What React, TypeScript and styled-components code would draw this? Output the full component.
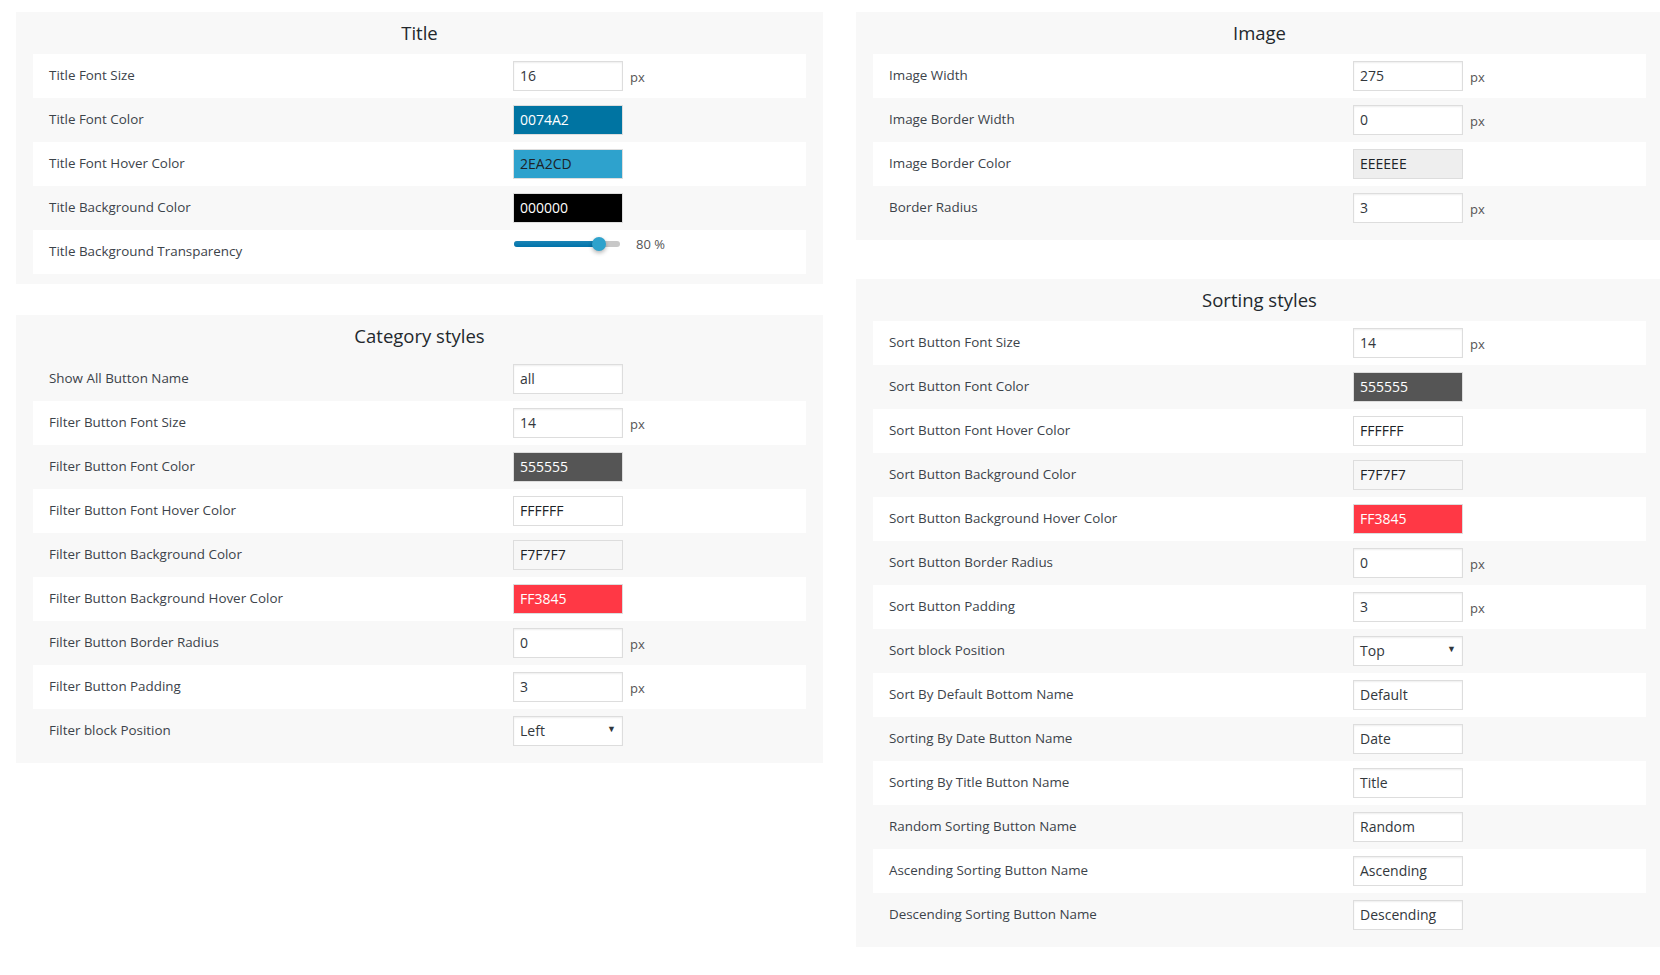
import React from 'react';
import styled, { createGlobalStyle } from 'styled-components';

const GlobalStyle = createGlobalStyle`
  html, body {
    margin: 0;
    padding: 0;
    background: #fff;
    overflow: hidden;
  }
  body {
    font-family: 'Open Sans', 'Noto Sans', sans-serif;
    color: #444;
  }
`;

type Field =
  | { kind: 'number'; label: string; value: string }
  | { kind: 'text'; label: string; value: string }
  | { kind: 'color'; label: string; value: string; fg: string }
  | { kind: 'range'; label: string; value: number }
  | { kind: 'select'; label: string; value: string };

interface Section {
  title: string;
  fields: Field[];
  shifted?: boolean;
}

const Page = styled.div`
  display: grid;
  grid-template-columns: 807px 807px;
  column-gap: 33px;
  padding: 12px 0 0 16px;
  width: 1700px;
  align-items: start;
`;

const Column = styled.div<{ $gap: number }>`
  display: flex;
  flex-direction: column;
  gap: ${(p) => p.$gap}px;
`;

const Panel = styled.section`
  background: #f8f8f8;
  padding: 0 17px 10px;
`;

const Heading = styled.h3`
  margin: 0;
  height: 42px;
  line-height: 42px;
  text-align: center;
  font-size: 18.5px;
  font-weight: 500;
  color: #23282d;
`;

const Row = styled.div<{ $white: boolean; $top?: boolean }>`
  display: grid;
  grid-template-columns: 480px 1fr;
  align-items: ${(p) => (p.$top ? 'start' : 'center')};
  height: 44px;
  background: ${(p) => (p.$white ? '#fff' : 'transparent')};
`;

const Label = styled.div<{ $top?: boolean }>`
  padding-left: 16px;
  font-size: 13.4px;
  color: #3c434a;
  margin-top: -2px;
  ${(p) => (p.$top ? 'align-self: center;' : '')}
`;

const Control = styled.div`
  display: flex;
  align-items: center;
  gap: 7px;
  margin-top: -1px;
`;

const Input = styled.div<{ $bg?: string; $fg?: string }>`
  box-sizing: border-box;
  width: 110px;
  height: 30px;
  padding: 0 6px;
  display: flex;
  align-items: center;
  border: 1px solid #ddd;
  box-shadow: ${(p) => (p.$bg ? 'none' : 'inset 0 1px 2px rgba(0,0,0,0.07)')};
  background: ${(p) => p.$bg || '#fff'};
  color: ${(p) => p.$fg || '#32373c'};
  font-size: 14px;
`;

const Unit = styled.span`
  font-size: 13px;
  color: #555;
  margin-top: 3px;
`;

const Arrow = styled.span`
  margin-left: auto;
  font-size: 9px;
  color: #32373c;
  margin-top: -4px;
`;

const SliderBox = styled.div`
  display: flex;
  align-items: center;
  gap: 16px;
  margin-top: 5px;
  padding-left: 1px;
`;

const Track = styled.div`
  position: relative;
  width: 106px;
  height: 6px;
  border-radius: 3px;
  background: #c8c8c8;
`;

const Fill = styled.div`
  height: 100%;
  border-radius: 3px;
  background: linear-gradient(#1a84b6, #0073aa);
`;

const Thumb = styled.div`
  position: absolute;
  top: 50%;
  width: 14px;
  height: 14px;
  margin: -7px 0 0 -7px;
  border-radius: 50%;
  background: #2ea2cc;
  box-shadow: 0 2px 4px rgba(0, 0, 0, 0.3);
`;

const Percent = styled.span`
  font-size: 13px;
  color: #555;
`;

const px = (label: string, value: string): Field => ({ kind: 'number', label, value });
const txt = (label: string, value: string): Field => ({ kind: 'text', label, value });
const col = (label: string, value: string, fg: string): Field => ({ kind: 'color', label, value, fg });

const titleSection: Section = {
  title: 'Title',
  fields: [
    px('Title Font Size', '16'),
    col('Title Font Color', '0074A2', '#fff'),
    col('Title Font Hover Color', '2EA2CD', '#1d2327'),
    col('Title Background Color', '000000', '#fff'),
    { kind: 'range', label: 'Title Background Transparency', value: 80 },
  ],
};

const categorySection: Section = {
  title: 'Category styles',
  shifted: true,
  fields: [
    txt('Show All Button Name', 'all'),
    px('Filter Button Font Size', '14'),
    col('Filter Button Font Color', '555555', '#fff'),
    col('Filter Button Font Hover Color', 'FFFFFF', '#1d2327'),
    col('Filter Button Background Color', 'F7F7F7', '#1d2327'),
    col('Filter Button Background Hover Color', 'FF3845', '#fff'),
    px('Filter Button Border Radius', '0'),
    px('Filter Button Padding', '3'),
    { kind: 'select', label: 'Filter block Position', value: 'Left' },
  ],
};

const imageSection: Section = {
  title: 'Image',
  fields: [
    px('Image Width', '275'),
    px('Image Border Width', '0'),
    col('Image Border Color', 'EEEEEE', '#1d2327'),
    px('Border Radius', '3'),
  ],
};

const sortingSection: Section = {
  title: 'Sorting styles',
  fields: [
    px('Sort Button Font Size', '14'),
    col('Sort Button Font Color', '555555', '#fff'),
    col('Sort Button Font Hover Color', 'FFFFFF', '#1d2327'),
    col('Sort Button Background Color', 'F7F7F7', '#1d2327'),
    col('Sort Button Background Hover Color', 'FF3845', '#fff'),
    px('Sort Button Border Radius', '0'),
    px('Sort Button Padding', '3'),
    { kind: 'select', label: 'Sort block Position', value: 'Top' },
    txt('Sort By Default Bottom Name', 'Default'),
    txt('Sorting By Date Button Name', 'Date'),
    txt('Sorting By Title Button Name', 'Title'),
    txt('Random Sorting Button Name', 'Random'),
    txt('Ascending Sorting Button Name', 'Ascending'),
    txt('Descending Sorting Button Name', 'Descending'),
  ],
};

function renderControl(field: Field): React.ReactElement {
  switch (field.kind) {
    case 'number':
      return (
        <Control>
          <Input>{field.value}</Input>
          <Unit>px</Unit>
        </Control>
      );
    case 'text':
      return (
        <Control>
          <Input>{field.value}</Input>
        </Control>
      );
    case 'color':
      return (
        <Control>
          <Input $bg={`#${field.value}`} $fg={field.fg}>
            {field.value}
          </Input>
        </Control>
      );
    case 'select':
      return (
        <Control>
          <Input>
            {field.value}
            <Arrow>▼</Arrow>
          </Input>
        </Control>
      );
    case 'range':
      return (
        <SliderBox>
          <Track>
            <Fill style={{ width: `${field.value}%` }} />
            <Thumb style={{ left: `${field.value}%` }} />
          </Track>
          <Percent>{field.value} %</Percent>
        </SliderBox>
      );
  }
}

function SettingsPanel({ section }: { section: Section }): React.ReactElement {
  return (
    <Panel>
      <Heading>{section.title}</Heading>
      {section.fields.map((field, i) => {
        const white = (i + (section.shifted ? 1 : 0)) % 2 === 0;
        const top = field.kind === 'range';
        return (
          <Row key={field.label} $white={white} $top={top}>
            <Label $top={top}>{field.label}</Label>
            {renderControl(field)}
          </Row>
        );
      })}
    </Panel>
  );
}

export default function App(): React.ReactElement {
  return (
    <>
      <GlobalStyle />
      <Page>
        <Column $gap={31}>
          <SettingsPanel section={titleSection} />
          <SettingsPanel section={categorySection} />
        </Column>
        <Column $gap={39}>
          <SettingsPanel section={imageSection} />
          <SettingsPanel section={sortingSection} />
        </Column>
      </Page>
    </>
  );
}
